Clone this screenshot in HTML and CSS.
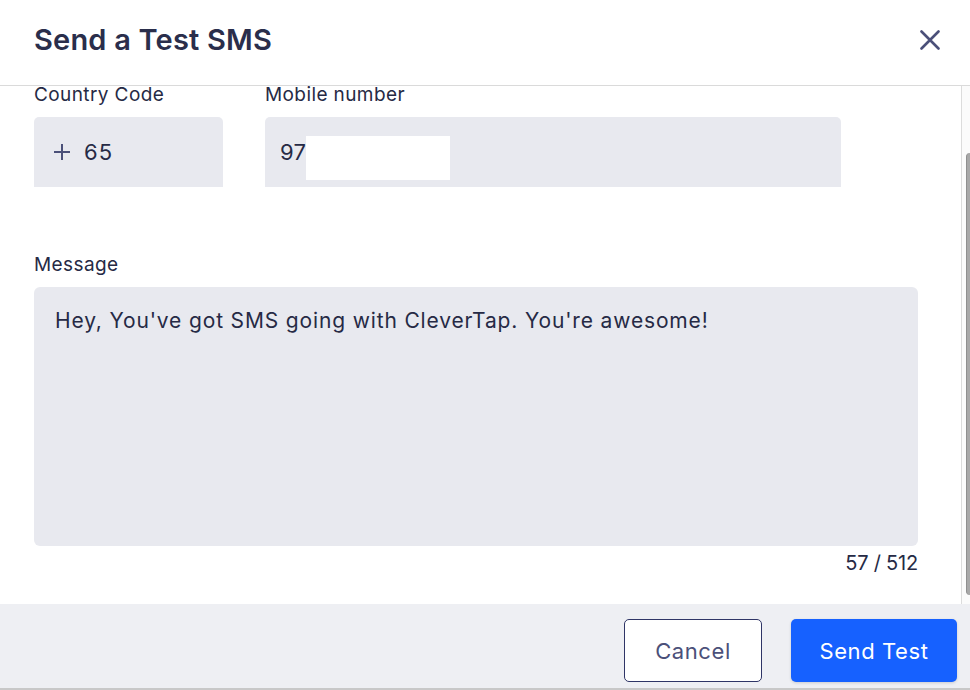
FILE: index.html
```html
<!DOCTYPE html>
<html lang="en">
<head>
<meta charset="utf-8">
<title>Send a Test SMS</title>
<link rel="stylesheet" href="styles.css">
</head>
<body>
<div class="modal">
  <header class="head">
    <h1 class="title">Send a Test SMS</h1>
    <button class="close" aria-label="Close">
      <svg width="20" height="20" viewBox="0 0 20 20"><path d="M1.5 1.5 L18.5 18.5 M18.5 1.5 L1.5 18.5" stroke="#4b5079" stroke-width="2.6" stroke-linecap="round" fill="none"/></svg>
    </button>
  </header>
  <div class="body">
    <div class="content">
      <div class="row">
        <div class="field cc">
          <div class="label">Country Code</div>
          <div class="input">
            <svg class="plus" width="18" height="18" viewBox="0 0 18 18"><path d="M9 1 V17 M1 9 H17" stroke="#4b5079" stroke-width="2" fill="none"/></svg>
            <span>65</span>
          </div>
        </div>
        <div class="field mobile">
          <div class="label">Mobile number</div>
          <div class="input">97<span class="redact"></span></div>
        </div>
      </div>
      <div class="field msg">
        <div class="label">Message</div>
        <div class="textarea">Hey, You've got SMS going with CleverTap. You're awesome!</div>
        <div class="count">57 / 512</div>
      </div>
    </div>
    <div class="track"><div class="thumb"></div></div>
  </div>
  <footer class="foot">
    <button class="btn cancel">Cancel</button>
    <button class="btn primary">Send Test</button>
  </footer>
</div>
</body>
</html>
```
FILE: styles.css
```css
* { box-sizing: border-box; }
html, body { margin: 0; padding: 0; background: #ffffff; }
body { font-family: "Inter", "Lato", sans-serif; color: #262a45; }

.modal {
  width: 970px;
  height: 690px;
  overflow: hidden;
  display: flex;
  flex-direction: column;
  background: #ffffff;
}

.head {
  flex: 0 0 86px;
  display: flex;
  align-items: center;
  justify-content: space-between;
  padding: 0 30px 6px 34px;
  border-bottom: 1px solid #dadada;
}
.title {
  margin: 0;
  font-size: 29px;
  font-weight: 600;
  color: #2a2e4b;
  letter-spacing: 0.2px;
}
.close {
  border: 0;
  background: transparent;
  padding: 0;
  width: 20px;
  height: 20px;
  display: flex;
}

.body {
  flex: 1 1 auto;
  display: flex;
  min-height: 0;
}
.content {
  flex: 1 1 auto;
  padding: 0 43px 0 34px;
}
.track {
  flex: 0 0 9px;
  border-left: 1px solid #dcdcdc;
  background: #fbfbfb;
  padding: 67px 0 0 4px;
}
.thumb {
  height: 442px;
  background: #a8a8a8;
  border-radius: 4px 0 0 4px;
  border-left: 1px solid #8f8f8f;
}

.label {
  font-size: 19px;
  line-height: 18px;
  letter-spacing: 0.4px;
  color: #262a45;
  margin-bottom: 13px;
}
.row {
  display: flex;
  gap: 42px;
}
.input {
  height: 70px;
  background: #e8e9ef;
  border-radius: 5px 5px 0 0;
  display: flex;
  align-items: center;
  padding-left: 19px;
  font-size: 22px;
  letter-spacing: 1px;
  color: #262a45;
}
.cc { width: 189px; }
.mobile { width: 576px; }
.mobile .input { padding-left: 15px; letter-spacing: 0.4px; }
.plus {
  margin-right: 13px;
  flex: 0 0 auto;
}
.redact {
  width: 144px;
  height: 44px;
  background: #ffffff;
  align-self: flex-start;
  margin-top: 19px;
  margin-left: 0;
}

.msg { margin-top: 69px; }
.textarea {
  height: 259px;
  background: #e8e9ef;
  border-radius: 6px;
  padding: 20px 21px;
  font-size: 21px;
  line-height: 28px;
  letter-spacing: 0.85px;
  color: #262a45;
}
.count {
  margin-top: 7px;
  text-align: right;
  font-size: 20px;
  line-height: 20px;
  letter-spacing: -0.2px;
  color: #262a45;
}

.foot {
  flex: 0 0 86px;
  background: #eeeff3;
  border-bottom: 2px solid #c8c8c8;
  display: flex;
  justify-content: flex-end;
  align-items: flex-start;
  gap: 29px;
  padding: 15px 13px 0 0;
}
.btn {
  height: 63px;
  border-radius: 5px;
  font-family: inherit;
  font-size: 22px;
  letter-spacing: 0.6px;
  cursor: pointer;
}
.cancel {
  width: 138px;
  background: #ffffff;
  border: 1.5px solid #2f3566;
  color: #4b5079;
}
.primary {
  width: 166px;
  background: #1661ff;
  border: 0;
  color: #ffffff;
  box-shadow: 0 1px 3px rgba(0, 0, 0, 0.15);
}
```
